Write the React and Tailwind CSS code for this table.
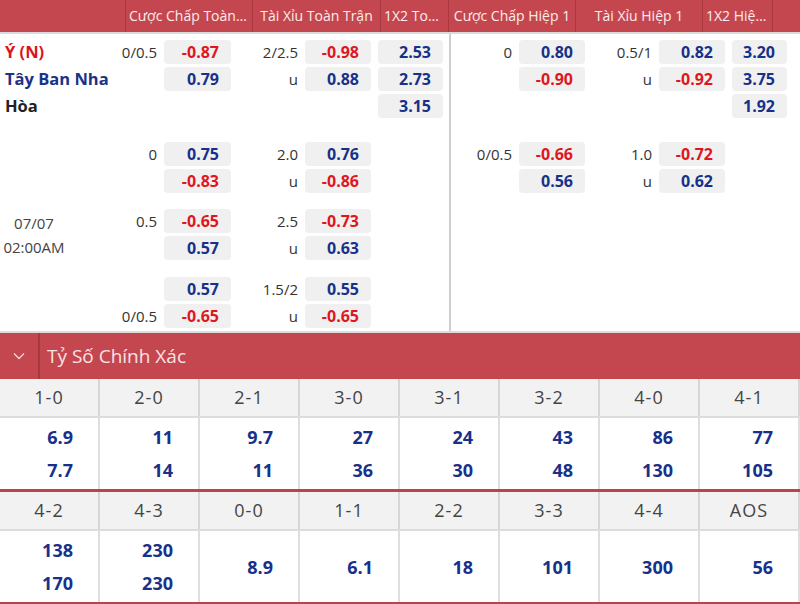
import React from 'react';

const FONT = { fontFamily: '"Open Sans", "Noto Sans", sans-serif' };

const HEAD = [
  { label: '', w: 'w-[126px]' },
  { label: 'Cược Chấp Toàn Trận', w: 'w-[127px]' },
  { label: 'Tài Xỉu Toàn Trận', w: 'w-[128px]' },
  { label: '1X2 Toàn Trận', w: 'w-[68px]' },
  { label: 'Cược Chấp Hiệp 1', w: 'w-[127px]' },
  { label: 'Tài Xỉu Hiệp 1', w: 'w-[127px]' },
  { label: '1X2 Hiệp 1', w: 'w-[70px]' },
  { label: '', w: 'flex-1' },
];

// one block per match line; first block carries the team names, third the kick-off time
const GROUPS = [
  {
    mt: 'mt-[6px]',
    rows: [
      { name: 'Ý (N)', nameCls: 'text-[#d8151d]', hl: '0/0.5', h: '-0.87', ol: '2/2.5', o: '-0.98', x: '2.53', hl1: '0', h1: '0.80', ol1: '0.5/1', o1: '0.82', x1: '3.20' },
      { name: 'Tây Ban Nha', nameCls: 'text-[#1b3288]', hl: '', h: '0.79', ol: 'u', o: '0.88', x: '2.73', hl1: '', h1: '-0.90', ol1: 'u', o1: '-0.92', x1: '3.75' },
      { name: 'Hòa', nameCls: 'text-[#222]', x: '3.15', x1: '1.92' },
    ],
  },
  {
    mt: 'mt-[24px]',
    rows: [
      { hl: '0', h: '0.75', ol: '2.0', o: '0.76', hl1: '0/0.5', h1: '-0.66', ol1: '1.0', o1: '-0.72' },
      { hl: '', h: '-0.83', ol: 'u', o: '-0.86', hl1: '', h1: '0.56', ol1: 'u', o1: '0.62' },
    ],
  },
  {
    mt: 'mt-[16px]',
    date: true,
    rows: [
      { hl: '0.5', h: '-0.65', ol: '2.5', o: '-0.73' },
      { hl: '', h: '0.57', ol: 'u', o: '0.63' },
    ],
  },
  {
    mt: 'mt-[17px]',
    rows: [
      { hl: '', h: '0.57', ol: '1.5/2', o: '0.55' },
      { hl: '0/0.5', h: '-0.65', ol: 'u', o: '-0.65' },
    ],
  },
];

const SCORES = [
  [['1-0', '6.9', '7.7'], ['2-0', '11', '14'], ['2-1', '9.7', '11'], ['3-0', '27', '36'], ['3-1', '24', '30'], ['3-2', '43', '48'], ['4-0', '86', '130'], ['4-1', '77', '105']],
  [['4-2', '138', '170'], ['4-3', '230', '230'], ['0-0', '8.9'], ['1-1', '6.1'], ['2-2', '18'], ['3-3', '101'], ['4-4', '300'], ['AOS', '56']],
];

function Odd({ v, w = 'w-[67px]' }) {
  if (!v) return <div className={`${w} h-6 shrink-0`} />;
  const neg = v.startsWith('-');
  return (
    <div className={`${w} h-6 shrink-0 rounded-[4px] bg-[#f0f0f0] pr-3 text-right text-[16px] font-bold leading-6 ${neg ? 'text-[#e0161f]' : 'text-[#17318a]'}`}>
      {v}
    </div>
  );
}

function Line({ v, w }) {
  return <div className={`${w} shrink-0 pr-[7px] text-right text-[15px] leading-6 text-[#333]`}>{v}</div>;
}

function Row({ r }) {
  return (
    <div className="flex h-6">
      <div className="flex w-[449px] shrink-0">
        <div className={`w-[120px] shrink-0 pl-[5px] text-[16.5px] font-bold leading-6 whitespace-nowrap ${r.nameCls || ''}`}>{r.name}</div>
        <Line v={r.hl} w="w-[44px]" />
        <Odd v={r.h} />
        <Line v={r.ol} w="w-[74px]" />
        <Odd v={r.o} w="w-[66px]" />
        <div className="w-[7px] shrink-0" />
        <Odd v={r.x} w="w-[65px]" />
      </div>
      <div className="flex flex-1 pl-[2px]">
        <Line v={r.hl1} w="w-[68px]" />
        <Odd v={r.h1} w="w-[66px]" />
        <Line v={r.ol1} w="w-[74px]" />
        <Odd v={r.o1} w="w-[66px]" />
        <div className="w-[7px] shrink-0" />
        <Odd v={r.x1} w="w-[55px]" />
      </div>
    </div>
  );
}

function Group({ g }) {
  return (
    <div className={`relative ${g.mt} flex flex-col gap-[3px]`}>
      {g.rows.map((r, i) => <Row key={i} r={r} />)}
      {g.date && (
        <div className="absolute left-0 top-0 flex h-full w-[68px] flex-col items-center justify-center bg-white text-[15px] leading-6 text-[#444]">
          <div>07/07</div>
          <div>02:00AM</div>
        </div>
      )}
    </div>
  );
}

function ScoreBlock({ cells, first }) {
  return (
    <div className={first ? '' : 'border-t-[3px] border-[#b9444b]'}>
      <div className="grid grid-cols-8 bg-[#f2f2f2] border-b-2 border-[#dcdcdc]">
        {cells.map(c => (
          <div key={c[0]} className="h-[37px] border-r-2 border-[#d6d6d6] text-center text-[18px] leading-[37px] tracking-[1px] text-[#444]">
            {c[0]}
          </div>
        ))}
      </div>
      <div className="grid grid-cols-8 bg-white">
        {cells.map(c => (
          <div key={c[0]} className="flex h-[71px] flex-col justify-center gap-[9px] border-r-2 border-[#dedede] pr-[25px] text-right text-[18px] font-bold leading-6 text-[#17318a]">
            {c.slice(1).map((v, i) => <div key={i}>{v}</div>)}
          </div>
        ))}
      </div>
    </div>
  );
}

export default function App() {
  return (
    <div className="w-[800px] h-[604px] overflow-hidden bg-white" style={FONT}>
      {/* column header */}
      <div className="flex h-[32px] bg-[#c4474f] border-b-2 border-[#dadada] box-content">
        {HEAD.map((h, i) => (
          <div key={i} className={`${h.w} shrink-0 truncate border-r border-[#a93840] px-[3px] text-center text-[14px] leading-[32px] text-[#fcecec] last:border-r-0`}>
            {h.label}
          </div>
        ))}
      </div>

      {/* odds body */}
      <div className="relative flex h-[297px] flex-col border-b-2 border-[#dcdcdc] box-content">
        <div className="absolute left-[449px] top-0 h-full w-[2px] bg-[#cfcfcf]" />
        {GROUPS.map((g, i) => <Group key={i} g={g} />)}
      </div>

      {/* correct score */}
      <div className="flex h-[46px] items-center bg-[#c4474f]">
        <div className="flex h-full w-[40px] items-center justify-center border-r-2 border-[#a9373f]">
          <svg width="12" height="8" viewBox="0 0 12 8" fill="none" stroke="#f4d6d8" strokeWidth="1.3">
            <path d="M1 1.5 L6 6.5 L11 1.5" />
          </svg>
        </div>
        <div className="pl-[7px] text-[19px] text-[#f8e2e3]">Tỷ Số Chính Xác</div>
      </div>
      {SCORES.map((cells, i) => <ScoreBlock key={i} cells={cells} first={i === 0} />)}
      <div className="h-[3px] bg-[#b9444b]" />
    </div>
  );
}
